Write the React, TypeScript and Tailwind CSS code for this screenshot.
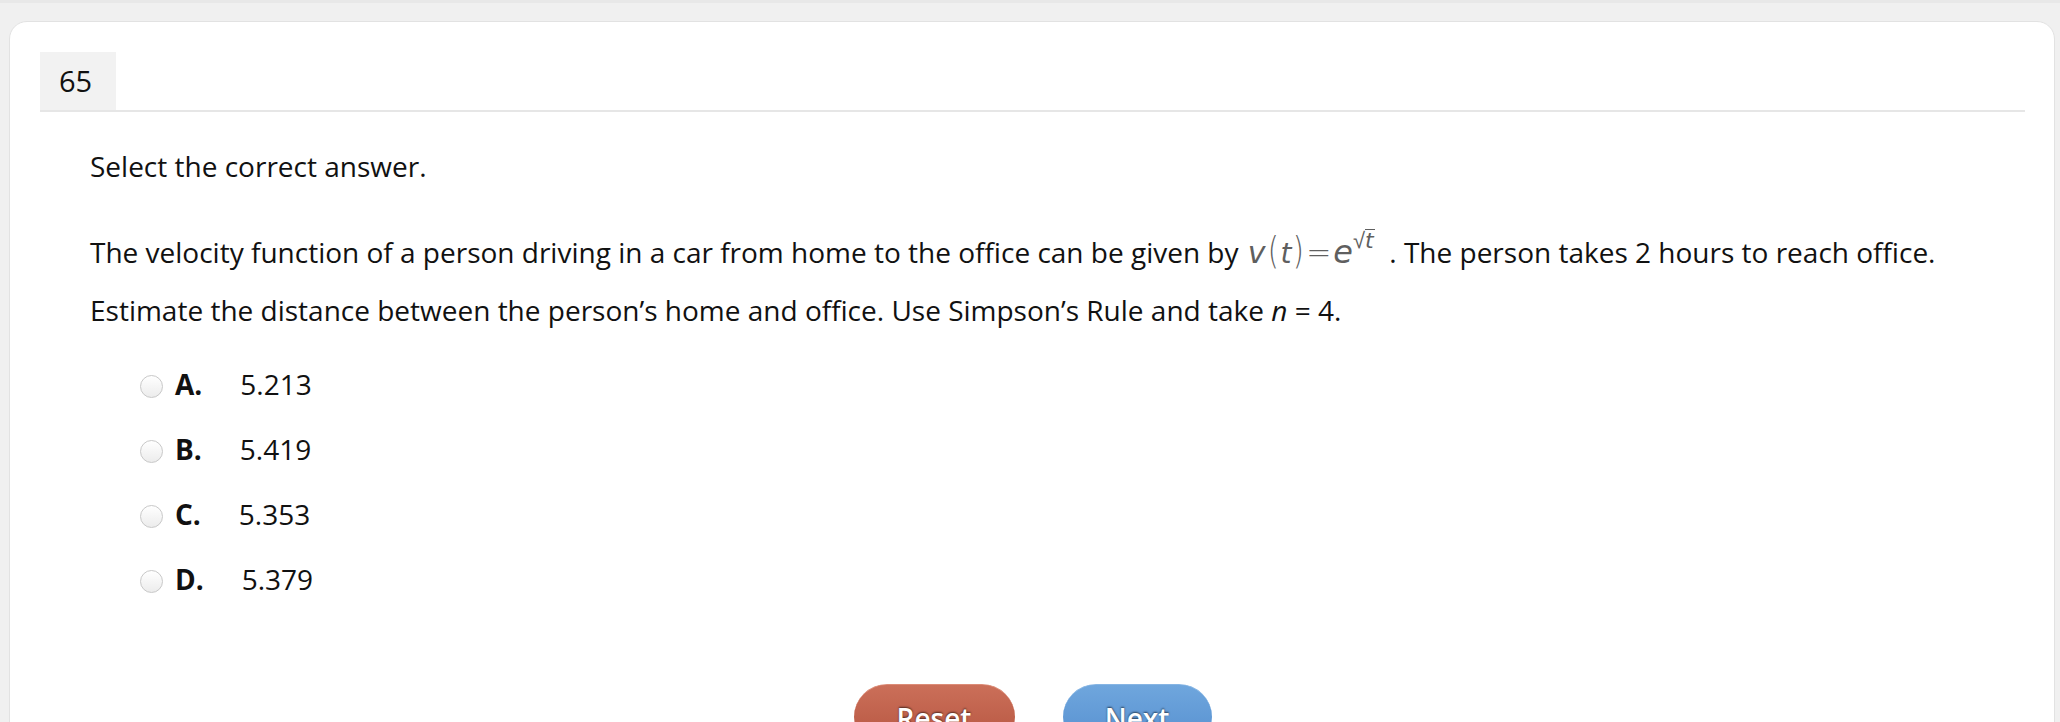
import React from 'react';

type Choice = { key: string; value: string };

const choices: Choice[] = [
  { key: 'A.', value: '5.213' },
  { key: 'B.', value: '5.419' },
  { key: 'C.', value: '5.353' },
  { key: 'D.', value: '5.379' },
];

function Formula() {
  // v(t) = e^{sqrt t}, drawn as gray text like the original equation image
  return (
    <span className="inline-flex items-baseline ml-[2px] leading-none text-[#5f5f5f] font-['DejaVu_Sans',sans-serif]">
      <span className="italic text-[30px] font-light">v</span>
      <span className="text-[38px] font-extralight scale-x-75 inline-block">(</span>
      <span className="italic text-[28px] font-light">t</span>
      <span className="text-[38px] font-extralight scale-x-75 inline-block">)</span>
      <span className="text-[30px] font-extralight">=</span>
      <span className="italic text-[32px] font-extralight ml-[2px]">e</span>
      <span className="relative -top-[15px] inline-flex items-baseline text-[22px] font-extralight">
        <span>√</span>
        <span className="italic border-t border-[#5f5f5f] pr-[1px] leading-none">t</span>
      </span>
    </span>
  );
}

function Radio() {
  return (
    <span className="mt-[6px] w-[23px] h-[23px] rounded-full border border-[#c8c8c8] bg-gradient-to-b from-white to-[#ececec] shrink-0" />
  );
}

export default function App() {
  return (
    <div className="min-h-screen bg-[#f0f0f0] border-t-[3px] border-[#e8e8e8] pt-[18px] font-['Open_Sans',sans-serif] text-[#111]">
      <div className="ml-[9px] mr-[5px] rounded-[18px] border border-[#e2e2e2] bg-white pt-[30px] pl-[30px] pr-[29px] pb-10">
        {/* Question number */}
        <div className="border-b-2 border-[#e6e6e6]">
          <div className="w-[76px] h-[58px] bg-[#f2f2f2] flex items-center pl-[19px] text-[29px] font-medium">65</div>
        </div>

        <div className="pl-[50px]">
          <p className="mt-[34px] text-[28px] leading-[40px]">Select the correct answer.</p>

          <p className="mt-[37px] text-[28px] leading-[58px]">
            The velocity function of a person driving in a car from home to the office can be given by <Formula /> &nbsp;. The person takes 2 hours to reach office.
            <br />
            Estimate the distance between the person’s home and office. Use Simpson’s Rule and take <span className="italic">n</span> = 4.
          </p>

          {/* Choices */}
          <div className="mt-[12px] pl-[50px]">
            {choices.map((c) => (
              <div key={c.key} className="h-[65px] flex items-center text-[28px] leading-[38px]">
                <Radio />
                <span className="ml-[12px] font-bold">{c.key}</span>
                <span className="ml-[38px]">{c.value}</span>
              </div>
            ))}
          </div>
        </div>

        {/* Buttons */}
        <div className="mt-[73px] flex justify-center gap-[48px]">
          <button className="w-[161px] h-[66px] rounded-[33px] bg-gradient-to-b from-[#cb6f59] to-[#b4533e] border-t border-[#dc8c77] text-white text-[28px] font-semibold [text-shadow:0_-1px_2px_rgba(0,0,0,0.6)]">
            Reset
          </button>
          <button className="w-[149px] h-[66px] rounded-[33px] bg-gradient-to-b from-[#6fa6dd] to-[#548ecf] border-t border-[#86b5e4] text-white text-[28px] font-semibold [text-shadow:0_-1px_2px_rgba(0,0,0,0.6)]">
            Next
          </button>
        </div>
      </div>
    </div>
  );
}
